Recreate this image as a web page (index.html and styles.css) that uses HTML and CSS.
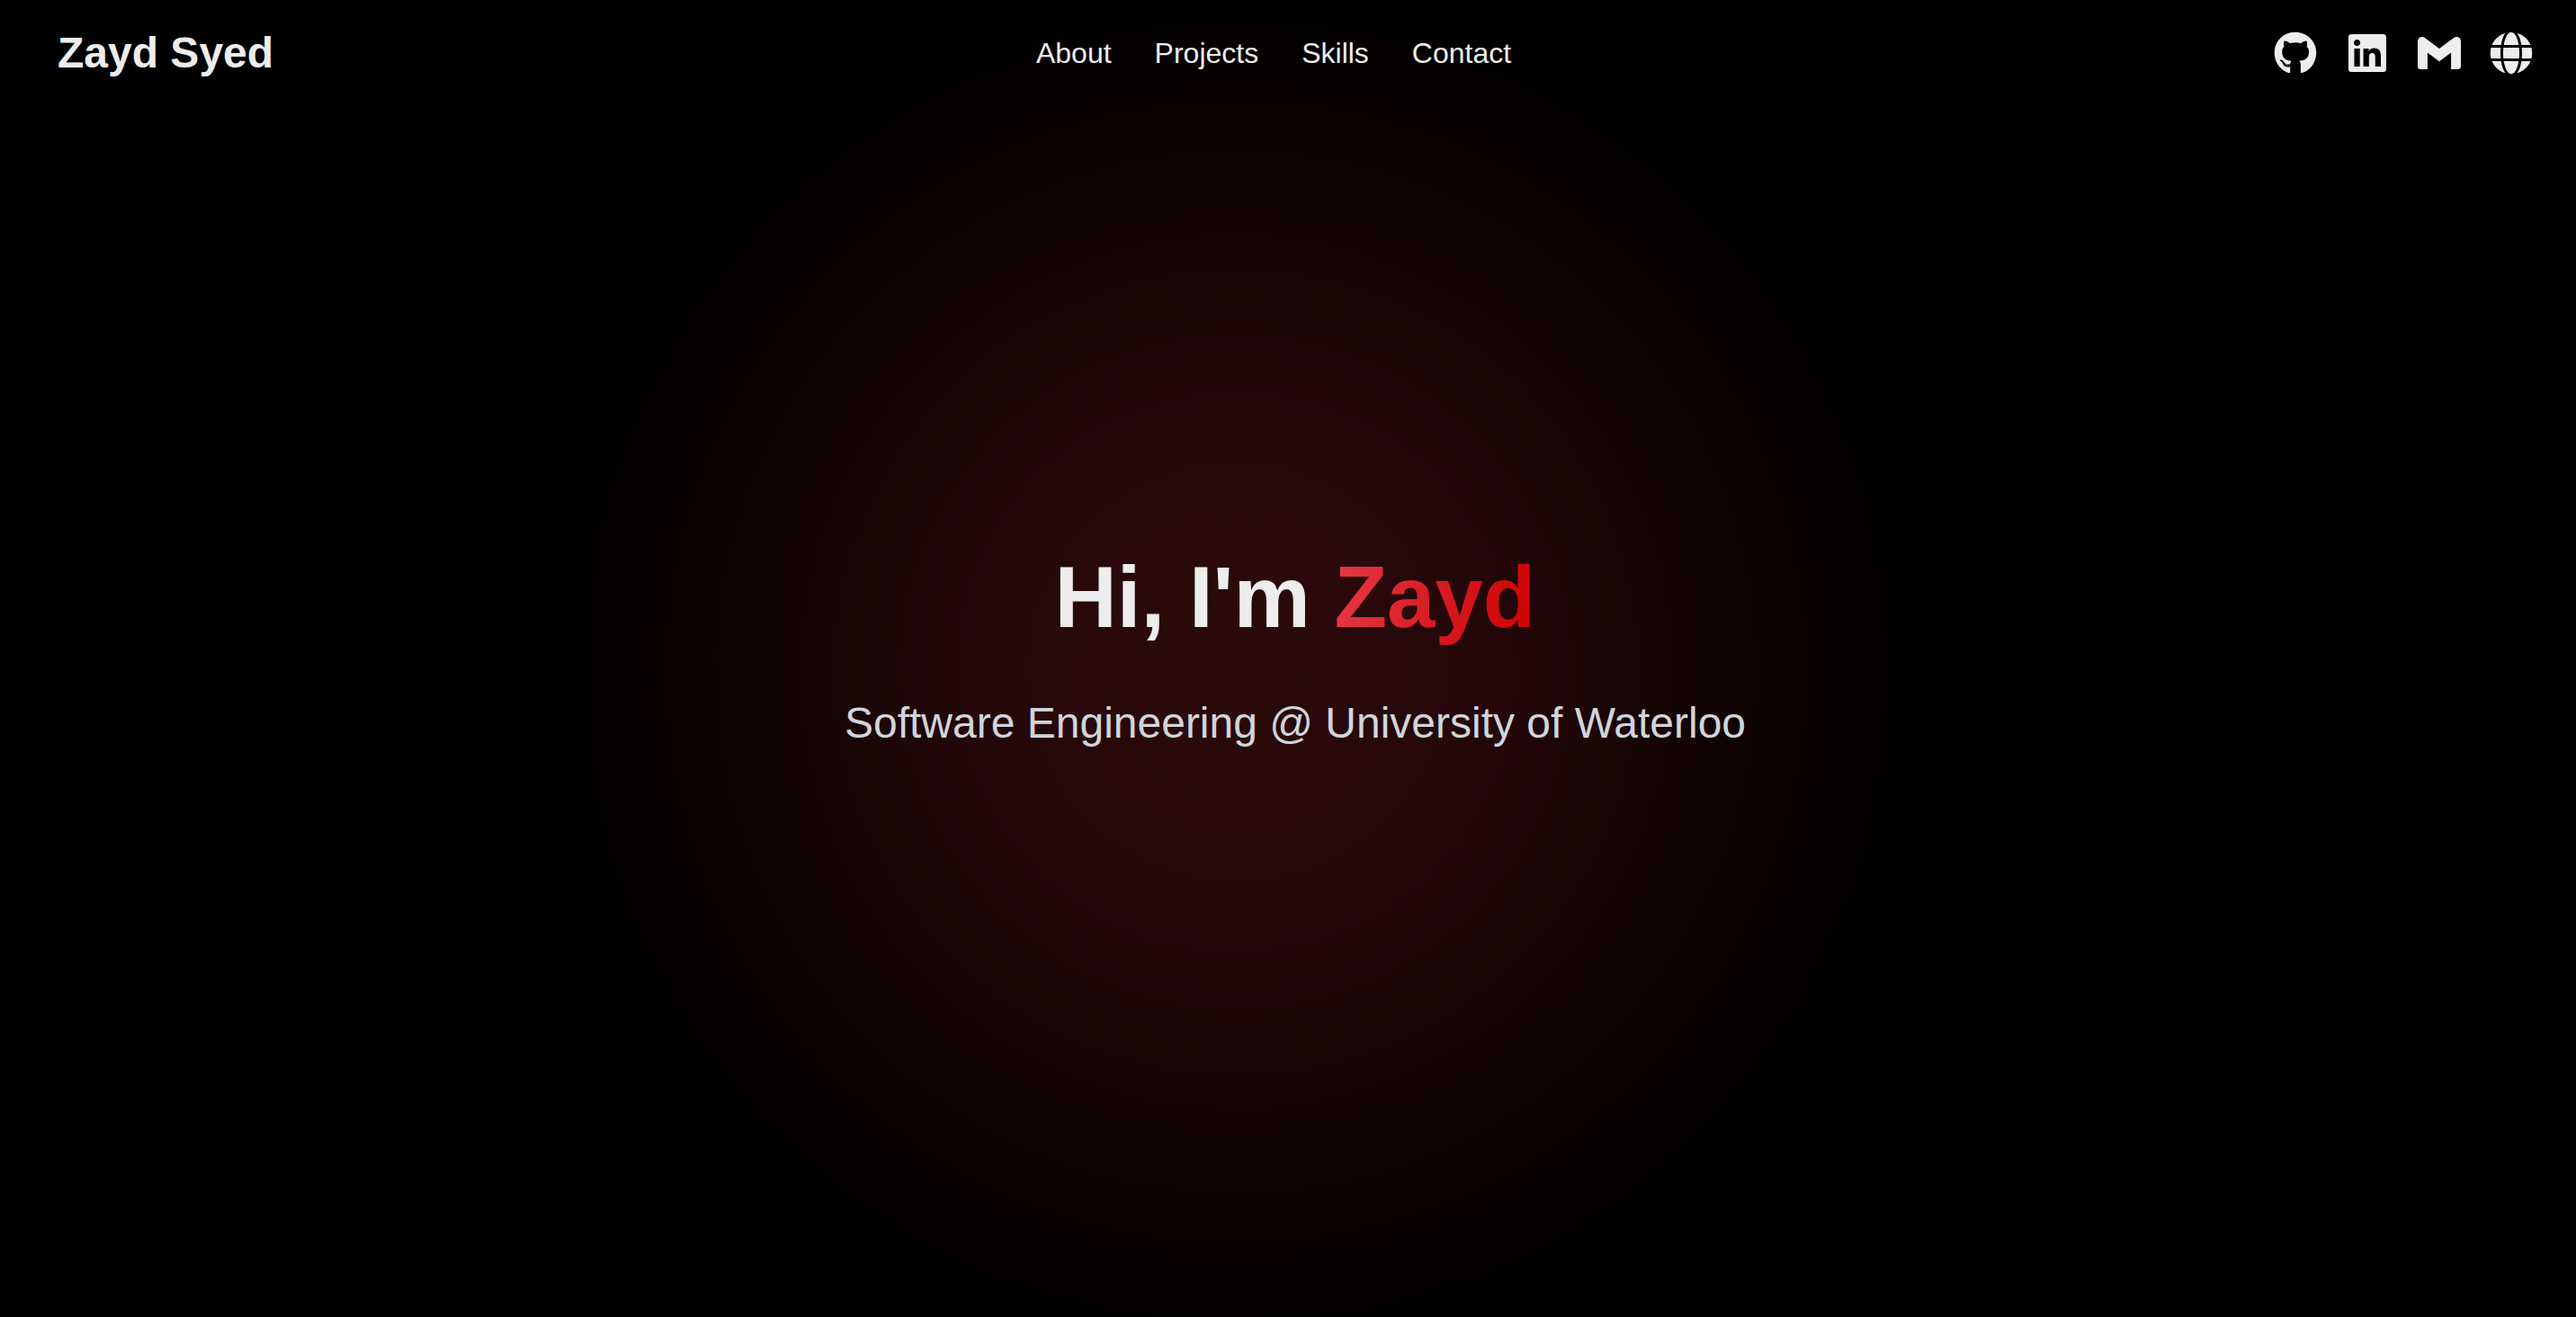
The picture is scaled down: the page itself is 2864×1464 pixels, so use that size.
FILE: index.html
```html
<!DOCTYPE html>
<html lang="en">
<head>
<meta charset="utf-8">
<meta name="viewport" content="width=device-width, initial-scale=1">
<title>Zayd Syed</title>
<link rel="stylesheet" href="styles.css">
</head>
<body>
<header class="site-header">
  <a class="brand" href="#home">Zayd Syed</a>
  <nav class="nav" aria-label="Main">
    <a href="#about">About</a>
    <a href="#projects">Projects</a>
    <a href="#skills">Skills</a>
    <a href="#contact">Contact</a>
  </nav>
  <div class="social">
    <a href="#github" aria-label="GitHub"><svg viewBox="0 0 496 512"><path d="M165.9 397.4c0 2-2.3 3.600-5.200 3.600-3.300.3-5.600-1.300-5.600-3.600 0-2 2.300-3.600 5.200-3.600 3-.3 5.600 1.300 5.600 3.600zm-31.100-4.500c-.7 2 1.300 4.300 4.300 4.900 2.600 1 5.600 0 6.200-2s-1.300-4.300-4.300-5.200c-2.600-.7-5.500.3-6.200 2.300zm44.200-1.700c-2.900.7-4.900 2.600-4.600 4.900.3 2 2.900 3.300 5.900 2.600 2.900-.7 4.900-2.600 4.600-4.600-.3-1.900-3-3.200-5.900-2.900zM244.800 8C106.100 8 0 113.300 0 252c0 110.900 69.800 205.800 169.500 239.200 12.800 2.300 17.300-5.600 17.300-12.100 0-6.200-.3-40.400-.3-61.400 0 0-70 15-84.700-29.800 0 0-11.400-29.100-27.800-36.600 0 0-22.900-15.700 1.600-15.400 0 0 24.900 2 38.600 25.800 21.900 38.600 58.600 27.500 72.900 20.900 2.300-16 8.800-27.100 16-33.700-55.900-6.200-112.300-14.300-112.300-110.500 0-27.500 7.600-41.300 23.600-58.900-2.600-6.500-11.100-33.300 2.600-67.900 20.900-6.500 69 27 69 27 20-5.600 41.500-8.500 62.800-8.500s42.800 2.900 62.800 8.500c0 0 48.100-33.600 69-27 13.700 34.700 5.200 61.400 2.600 67.900 16 17.700 25.800 31.500 25.800 58.900 0 96.500-58.900 104.200-114.800 110.500 9.200 7.900 17 22.900 17 46.400 0 33.700-.3 75.400-.3 83.600 0 6.500 4.600 14.400 17.300 12.100C428.200 457.800 496 362.900 496 252 496 113.300 383.500 8 244.800 8z"/></svg></a>
    <a href="#linkedin" aria-label="LinkedIn"><svg viewBox="0 0 448 512"><path d="M416 32H31.900C14.300 32 0 46.500 0 64.300v383.400C0 465.500 14.300 480 31.900 480H416c17.600 0 32-14.500 32-32.300V64.300c0-17.800-14.400-32.300-32-32.300zM135.400 416H69V202.200h66.500V416zm-33.200-243c-21.300 0-38.500-17.300-38.500-38.500S80.900 96 102.200 96c21.200 0 38.500 17.300 38.500 38.500 0 21.300-17.200 38.500-38.500 38.500zm282.100 243h-66.400V312c0-24.800-.5-56.700-34.500-56.700-34.600 0-39.900 27-39.900 54.900V416h-66.400V202.200h63.700v29.200h.9c8.900-16.800 30.600-34.500 62.900-34.500 67.200 0 79.700 44.300 79.700 101.900V416z"/></svg></a>
    <a href="#email" aria-label="Email"><svg viewBox="0 0 24 24"><path d="M24 5.457v13.909c0 .904-.732 1.636-1.636 1.636h-3.819V11.730L12 16.640l-6.545-4.910v9.273H1.636A1.636 1.636 0 0 1 0 19.366V5.457c0-2.023 2.309-3.178 3.927-1.964L5.455 4.640 12 9.548l6.545-4.910 1.528-1.145C21.690 2.280 24 3.434 24 5.457z"/></svg></a>
    <a href="#website" aria-label="Website"><svg viewBox="0 0 496 512"><path d="M336.500 160C322 70.700 287.800 8 248 8s-74 62.700-88.500 152h177zM152 256c0 22.200 1.200 43.500 3.300 64h185.300c2.100-20.500 3.300-41.800 3.300-64s-1.200-43.500-3.300-64H155.300c-2.100 20.500-3.300 41.800-3.300 64zm324.700-96c-28.600-67.900-86.500-120.400-158-141.600 24.400 33.800 41.200 84.700 50 141.600h108zM177.200 18.400C105.800 39.600 47.800 92.100 19.300 160h108c8.700-56.900 25.500-107.800 49.900-141.600zM487.400 192H372.700c2.100 21 3.300 42.500 3.300 64s-1.200 43-3.300 64h114.600c5.500-20.500 8.600-41.800 8.600-64s-3.100-43.500-8.500-64zM120 256c0-21.500 1.200-43 3.300-64H8.600C3.200 212.500 0 233.800 0 256s3.200 43.500 8.600 64h114.600c-2-21-3.200-42.500-3.200-64zm39.500 96c14.500 89.300 48.700 152 88.500 152s74-62.700 88.500-152h-177zm159.300 141.600c71.400-21.200 129.400-73.700 158-141.600h-108c-8.800 56.900-25.600 107.800-50 141.600zM19.300 352c28.600 67.900 86.500 120.400 158 141.600-24.400-33.800-41.200-84.700-50-141.600h-108z"/></svg></a>
  </div>
</header>
<main class="hero" id="home">
  <h1>Hi, I'm <span class="name">Zayd</span></h1>
  <p>Software Engineering @ University of Waterloo</p>
</main>
</body>
</html>
```
FILE: styles.css
```css
* { box-sizing: border-box; margin: 0; padding: 0; }

body {
  min-height: 100vh;
  display: flex;
  flex-direction: column;
  background: radial-gradient(circle 56vh at 48% 51%, #2b0a0a 0%, #28080b 22%, #230609 38%, #180505 55%, #0c0101 72%, #030000 88%, #000 100%) #000;
  color: #ededed;
  font-family: Arial, "Liberation Sans", sans-serif;
}

a { color: inherit; text-decoration: none; }

.site-header {
  display: flex;
  justify-content: space-between;
  align-items: center;
  padding: 31px 48px 31px 64px;
}

.brand { font-size: 48px; line-height: 56px; font-weight: 700; }

.nav { display: flex; gap: 48px; font-size: 32px; line-height: 48px; }

.social { display: flex; gap: 32px; }
.social a { display: flex; }
.social svg { width: 48px; height: 48px; fill: currentColor; }

.hero {
  flex: 1;
  display: flex;
  flex-direction: column;
  align-items: center;
  justify-content: center;
  gap: 64px;
  padding: 0 32px 134px 48px;
  text-align: center;
}

.hero h1 { font-size: 96px; line-height: 96px; }
.hero p { color: #d1d5db; font-size: 48px; line-height: 56px; }

.name {
  background: linear-gradient(100deg, #e63946, #cc0000);
  -webkit-background-clip: text;
  background-clip: text;
  color: transparent;
}
```
